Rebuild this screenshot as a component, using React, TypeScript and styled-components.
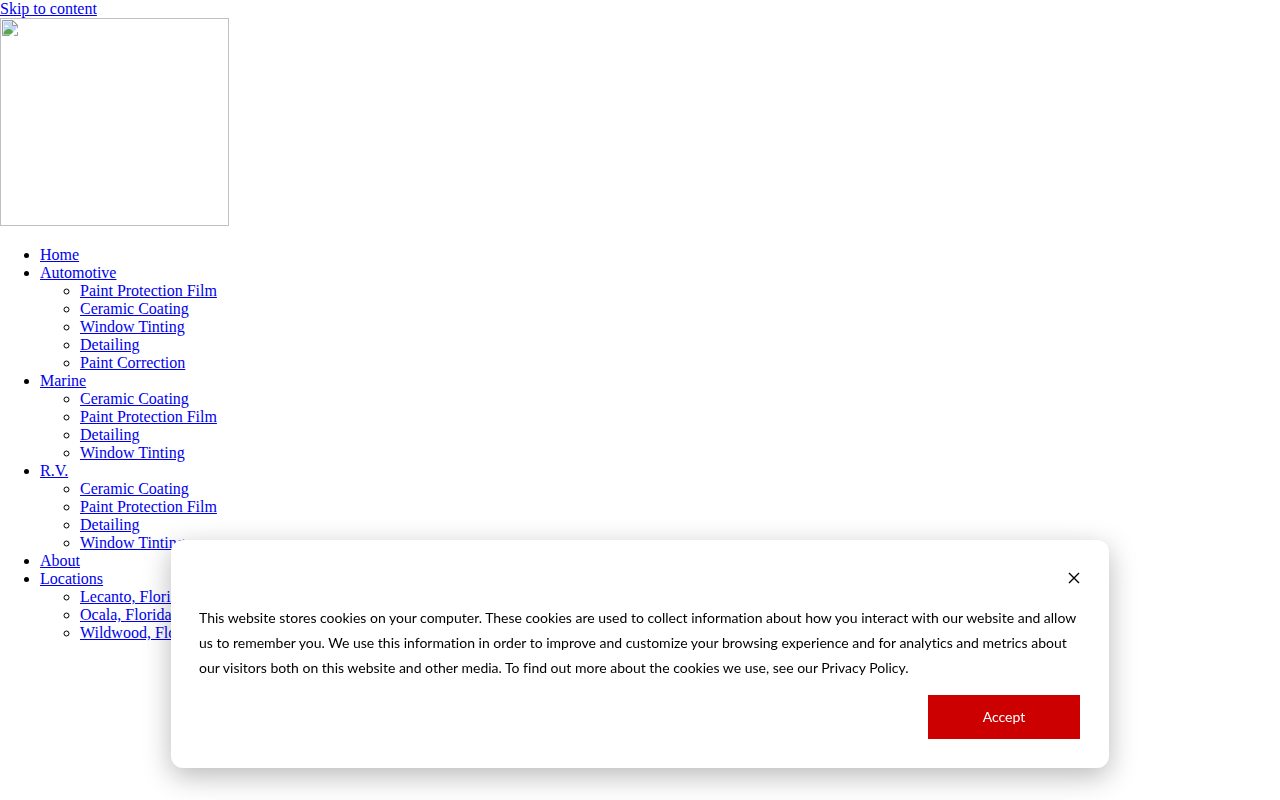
import React, { useState } from "react";
import styled, { createGlobalStyle } from "styled-components";

const GlobalStyle = createGlobalStyle`
  body {
    margin: 0;
    background: #fff;
    color: #000;
    font: 16px/18px "Liberation Serif", "Times New Roman", serif;
  }
`;

const TextLink = styled.a`
  color: #0000ee;
  text-decoration: underline;
`;

const LogoLink = styled.a`
  display: block;
  width: 229px;
  margin-bottom: 20px;
`;

const LogoFrame = styled.span`
  display: flex;
  box-sizing: border-box;
  height: 208px;
  padding: 1px;
  border: 1px solid #c0c0c0;
`;

const MenuList = styled.ul<{ $nested?: boolean }>`
  margin: 0;
  padding: 0 0 0 40px;
  list-style-type: ${({ $nested }) => ($nested ? "circle" : "disc")};
`;

const Banner = styled.div`
  position: fixed;
  right: 0;
  bottom: 32px;
  left: 0;
  box-sizing: border-box;
  width: calc(100% - 32px);
  max-width: 938px;
  margin: 0 auto;
  padding: 28px 29px 29px 28px;
  display: flex;
  flex-direction: column;
  border-radius: 12px;
  background: #fff;
  box-shadow: 0 8px 28px rgba(0, 0, 0, 0.28);
  font: 14px/25px Lato, sans-serif;
  font-variant-ligatures: none;
`;

const CloseButton = styled.button`
  display: flex;
  align-self: flex-end;
  align-items: center;
  height: 20px;
  padding: 0;
  border: 0;
  background: none;
  color: #000;
  cursor: pointer;
`;

const Message = styled.p`
  margin: 17px 0 15px;
`;

const AcceptButton = styled.button`
  align-self: flex-end;
  width: 152px;
  height: 44px;
  padding: 0;
  border: 0;
  background: #cc0000;
  color: #fff;
  font: inherit;
  line-height: 18px;
  cursor: pointer;
`;

const menu: { label: string; children?: string[] }[] = [
  { label: "Home" },
  {
    label: "Automotive",
    children: ["Paint Protection Film", "Ceramic Coating", "Window Tinting", "Detailing", "Paint Correction"],
  },
  { label: "Marine", children: ["Ceramic Coating", "Paint Protection Film", "Detailing", "Window Tinting"] },
  { label: "R.V.", children: ["Ceramic Coating", "Paint Protection Film", "Detailing", "Window Tinting"] },
  { label: "About" },
  { label: "Locations", children: ["Lecanto, Florida", "Ocala, Florida", "Wildwood, Florida"] },
];

function MissingImageIcon() {
  return (
    <svg width="16" height="16" viewBox="0 0 16 16" aria-hidden="true">
      <path d="M.5.5H11L15.500 5V15.500H.5Z" fill="#fff" />
      <path d="M1.500 1.500H10.500V5.500H14.500V14.500H1.500Z" fill="#c3d5f7" />
      <path d="M3 6.500C3 5.300 4.500 4.800 5 5.500 6.500 5 7 7 6 7H4C3.300 7 3 6.900 3 6.500Z" fill="#fff" />
      <path d="M1.500 14.500V13C3.500 8.500 8 8 10 10.500L13 14.500Z" fill="#57a846" />
      <path d="M.5 15.500V.5H11L15.500 5V15.500Z" fill="none" stroke="#9a9a9a" />
      <path d="M10.500.5V5.500H15.500Z" fill="#f4f4f4" stroke="#9a9a9a" />
      <path d="M7 16L16 7.500V11.500L11.500 16Z" fill="#fff" />
    </svg>
  );
}

function CookieBanner({ onClose }: { onClose: () => void }) {
  return (
    <Banner role="dialog" aria-label="Cookie banner">
      <CloseButton type="button" aria-label="Close" onClick={onClose}>
        <svg width="12" height="12" viewBox="0 0 12 12" fill="none" stroke="currentColor" strokeWidth="1.4">
          <path d="M1 1L11 11M11 1L1 11" />
        </svg>
      </CloseButton>
      <Message>
        This website stores cookies on your computer. These cookies are used to collect information about how you
        interact with our website and allow us to remember you. We use this information in order to improve and
        customize your browsing experience and for analytics and metrics about our visitors both on this website and
        other media. To find out more about the cookies we use, see our Privacy Policy.
      </Message>
      <AcceptButton type="button" onClick={onClose}>
        Accept
      </AcceptButton>
    </Banner>
  );
}

export default function App() {
  const [bannerOpen, setBannerOpen] = useState(true);
  return (
    <>
      <GlobalStyle />
      <TextLink href="#content">Skip to content</TextLink>
      <header id="content">
        <LogoLink href="#" aria-label="Homepage">
          <LogoFrame>
            <MissingImageIcon />
          </LogoFrame>
        </LogoLink>
        <nav>
          <MenuList>
            {menu.map(({ label, children }) => (
              <li key={label}>
                <TextLink href="#">{label}</TextLink>
                {children && (
                  <MenuList $nested>
                    {children.map((child) => (
                      <li key={child}>
                        <TextLink href="#">{child}</TextLink>
                      </li>
                    ))}
                  </MenuList>
                )}
              </li>
            ))}
          </MenuList>
        </nav>
      </header>
      {bannerOpen && <CookieBanner onClose={() => setBannerOpen(false)} />}
    </>
  );
}
